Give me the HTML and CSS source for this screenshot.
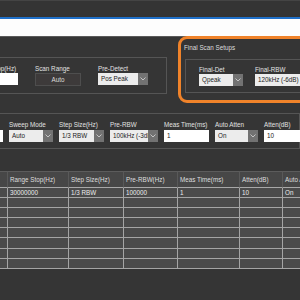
FILE: index.html
```html
<!DOCTYPE html>
<html>
<head>
<meta charset="utf-8">
<link rel="stylesheet" href="styles.css">
</head>
<body>
<div class="topbar"></div>
<div class="addr"></div>

<div class="setup">
	<div class="grp grp-a">
		<div class="fld w47"><span class="lbl">Range Stop(Hz)</span><div class="inp"></div></div>
		<div class="fld w46"><span class="lbl">Scan Range</span><div class="btn">Auto</div></div>
		<div class="fld w50"><span class="lbl">Pre-Detect</span>
			<div class="combo"><span class="val">Pos Peak</span><span class="arr"><svg width="6" height="4" viewBox="0 0 6 4"><path d="M0.5 0.5L3 3L5.5 0.5" stroke="#c4c4c4" fill="none"/></svg></span></div>
		</div>
	</div>
	<div class="final">
		<div class="final-title">Final Scan Setups</div>
		<div class="grp grp-f">
			<div class="fld w44"><span class="lbl">Final-Det</span>
				<div class="combo"><span class="val">Qpeak</span><span class="arr"><svg width="6" height="4" viewBox="0 0 6 4"><path d="M0.5 0.5L3 3L5.5 0.5" stroke="#c4c4c4" fill="none"/></svg></span></div>
			</div>
			<div class="fld w60"><span class="lbl">Final-RBW</span>
				<div class="combo"><span class="val">120kHz (-6dB)</span><span class="arr"><svg width="6" height="4" viewBox="0 0 6 4"><path d="M0.5 0.5L3 3L5.5 0.5" stroke="#c4c4c4" fill="none"/></svg></span></div>
			</div>
		</div>
	</div>
</div>

<div class="grp grp-b">
	<div class="fld w45"><span class="lbl">Stop Freq(Hz)</span><div class="inp"></div></div>
	<div class="fld w44"><span class="lbl">Sweep Mode</span>
		<div class="combo"><span class="val">Auto</span><span class="arr"><svg width="6" height="4" viewBox="0 0 6 4"><path d="M0.5 0.5L3 3L5.5 0.5" stroke="#c4c4c4" fill="none"/></svg></span></div>
	</div>
	<div class="fld w45"><span class="lbl">Step Size(Hz)</span>
		<div class="combo"><span class="val">1/3 RBW</span><span class="arr"><svg width="6" height="4" viewBox="0 0 6 4"><path d="M0.5 0.5L3 3L5.5 0.5" stroke="#c4c4c4" fill="none"/></svg></span></div>
	</div>
	<div class="fld w48"><span class="lbl">Pre-RBW</span>
		<div class="combo"><span class="val">100kHz (-3dB)</span><span class="arr"><svg width="6" height="4" viewBox="0 0 6 4"><path d="M0.5 0.5L3 3L5.5 0.5" stroke="#c4c4c4" fill="none"/></svg></span></div>
	</div>
	<div class="fld w45"><span class="lbl">Meas Time(ms)</span><div class="inp">1</div></div>
	<div class="fld w43"><span class="lbl">Auto Atten</span>
		<div class="combo"><span class="val">On</span><span class="arr"><svg width="6" height="4" viewBox="0 0 6 4"><path d="M0.5 0.5L3 3L5.5 0.5" stroke="#c4c4c4" fill="none"/></svg></span></div>
	</div>
	<div class="fld w46"><span class="lbl">Atten(dB)</span><div class="inp">10</div></div>
</div>

<table class="scan">
	<thead>
		<tr><th class="c0"></th><th class="c1">Range Stop(Hz)</th><th class="c2">Step Size(Hz)</th><th class="c3">Pre-RBW(Hz)</th><th class="c4">Meas Time(ms)</th><th class="c5">Atten(dB)</th><th class="c6">Auto Atten</th></tr>
	</thead>
	<tbody>
		<tr><td></td><td>30000000</td><td>1/3 RBW</td><td>100000</td><td>1</td><td>10</td><td>On</td></tr>
		<tr><td></td><td></td><td></td><td></td><td></td><td></td><td></td></tr>
		<tr><td></td><td></td><td></td><td></td><td></td><td></td><td></td></tr>
		<tr><td></td><td></td><td></td><td></td><td></td><td></td><td></td></tr>
		<tr><td></td><td></td><td></td><td></td><td></td><td></td><td></td></tr>
		<tr><td></td><td></td><td></td><td></td><td></td><td></td><td></td></tr>
		<tr><td></td><td></td><td></td><td></td><td></td><td></td><td></td></tr>
		<tr><td></td><td></td><td></td><td></td><td></td><td></td><td></td></tr>
	</tbody>
</table>
</body>
</html>
```

FILE: styles.css
```css
html,body{margin:0;padding:0}
body{background:#353535;font-family:"Liberation Sans",Arial,sans-serif;font-size:6.3px;color:#e2e2e2;width:300px;height:300px;overflow:hidden}

.topbar{height:16px;border-top:1px solid #444;background:#343434}
.addr{height:17px;border-top:2px solid #1f70c9;background:#fdfdfd;border-bottom:1px solid #5a5a5a}

.setup{display:flex;align-items:flex-start}
.grp{display:flex;border:1px solid #555;flex-shrink:0}
.grp-a{margin:20px 0 0 -38px;padding:7px 18px 7px 8px;gap:17px}
.grp-f{margin:7px 0 0 1px;padding:6px 0 6px 13px;gap:12px}
.grp-b{margin:10px 0 0 -50px;padding:7px 0 6px 7px;gap:6px}
.grp-b .lbl{margin-bottom:1px}

.final{flex-shrink:0;width:200px;margin:-1px 0 0 11px;border:3px solid #f0832a;border-radius:9px;padding:5px 0 7px 3px}
.final-title{height:8px;line-height:8px;white-space:nowrap;color:#dcdcdc}

.fld{display:flex;flex-direction:column;flex-shrink:0}
.w43{width:43px}.w44{width:44px}.w45{width:45px}.w46{width:46px}.w47{width:47px}.w48{width:48px}.w50{width:50px}.w60{width:60px}
.lbl{height:8px;line-height:8px;white-space:nowrap}

.inp{height:12px;line-height:12px;background:#fff;color:#222;padding-left:3px;box-sizing:border-box}
.btn{height:13px;line-height:11px;box-sizing:border-box;border:1px solid #4e4e4e;background:#3d3a3a;text-align:center;color:#ddd}
.combo{display:flex;height:12px;line-height:12px}
.combo .val{flex:1;min-width:0;overflow:hidden;white-space:nowrap;background:#ececec;color:#222;padding-left:3px}
.combo .arr{width:10px;flex-shrink:0;background:#727272;display:flex;align-items:center;justify-content:center}

.scan{margin-top:22px;border-collapse:separate;border-spacing:0;table-layout:fixed;width:343px}
.scan th,.scan td{box-sizing:border-box;padding:0 0 0 2px;text-align:left;white-space:nowrap;overflow:hidden}
.scan th{height:17px;font-weight:normal;background:#474747;color:#dedede;border-top:1px solid #5c5c5c;border-bottom:1px solid #a8a8a8;border-right:1px solid #595959}
.scan td{height:10.1px;line-height:9px;background:#4b4b4b;color:#ececec;border-bottom:1px solid #a5a5a5;border-right:1px solid #a5a5a5}
.c0{width:8px}.c1{width:61px}.c2{width:55px}.c3{width:54px}.c4{width:62px}.c5{width:43px}.c6{width:60px}
```
